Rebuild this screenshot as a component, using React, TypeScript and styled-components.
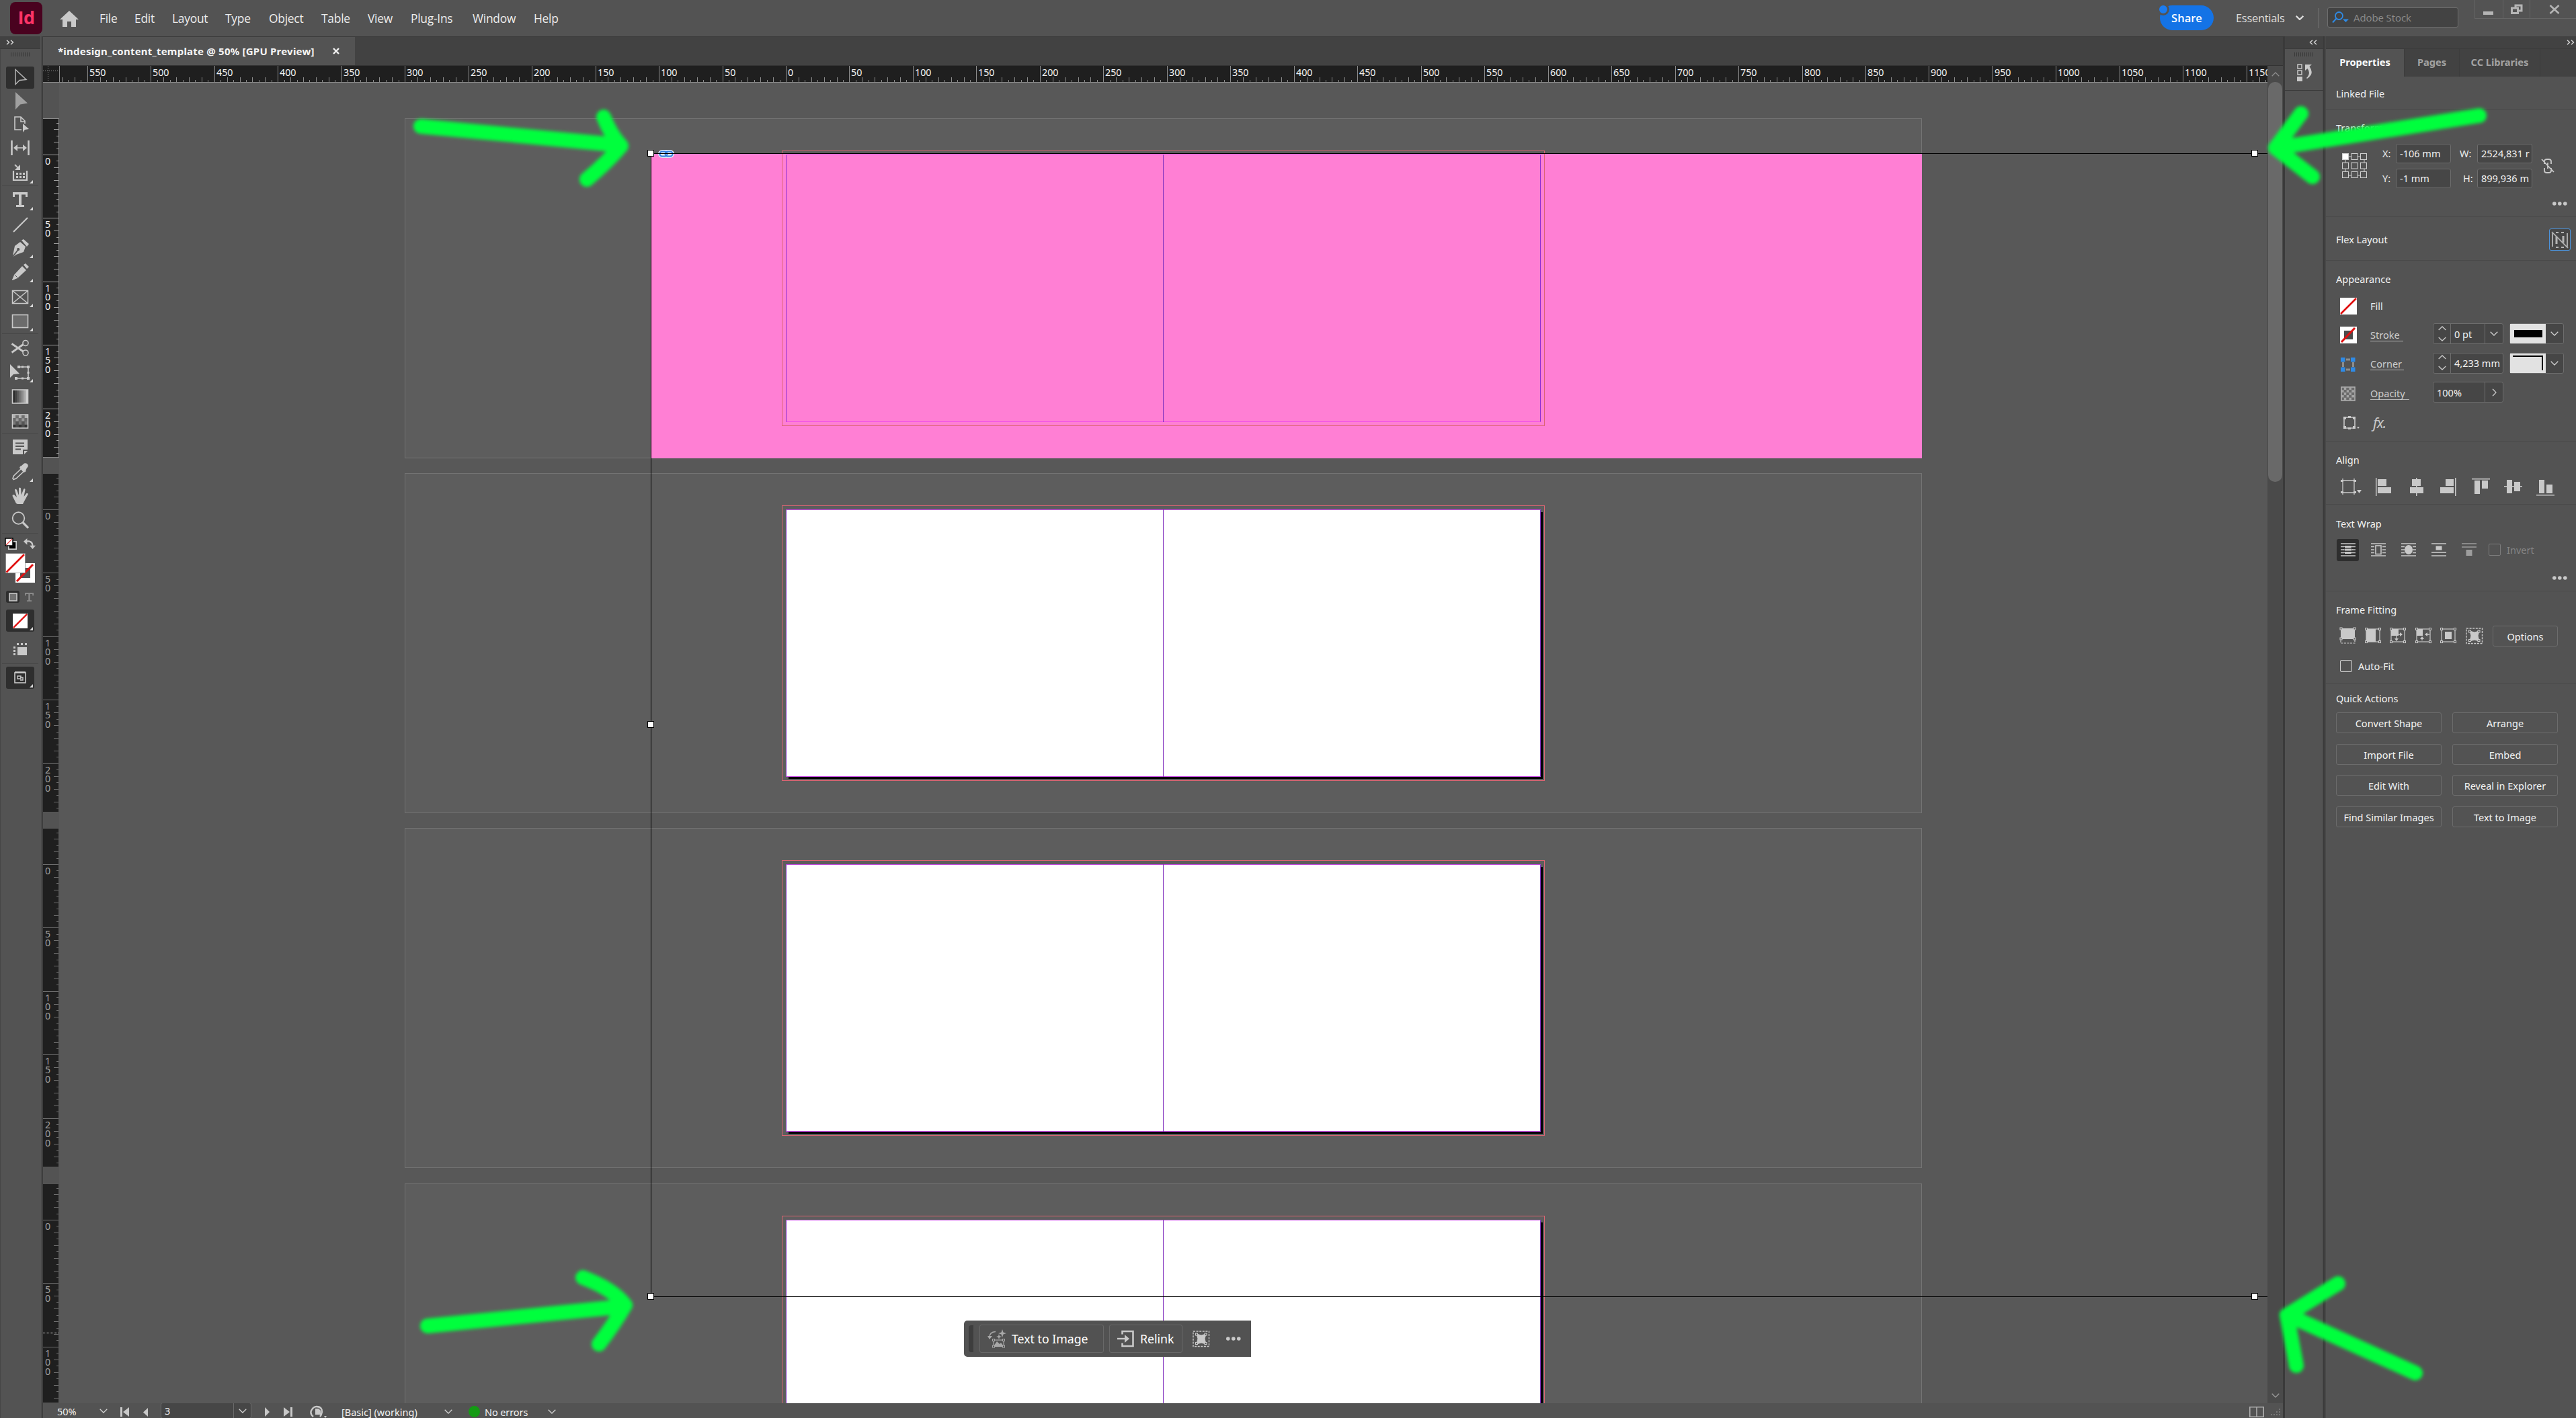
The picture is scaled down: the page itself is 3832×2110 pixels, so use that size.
import React from "react";
import styled, { createGlobalStyle, css } from "styled-components";

const C = {
  chrome: "#535353",
  dark: "#424242",
  edge: "#3a3a3a",
  field: "#464646",
  line: "#6d6d6d",
  icon: "#c9c9c9",
  text: "#f0f0f0",
  ruler: "#1f1f1f",
  canvas: "#585858",
  board: "#5d5d5d",
  green: "#00ff3c",
  blue: "#2f8be6",
};

const panelFont = `"Noto Sans", Tahoma, "DejaVu Sans", sans-serif`;
const menuFont = `"Open Sans", "Segoe UI", "Noto Sans", sans-serif`;

const Global = createGlobalStyle`
  html, body { margin: 0; background: ${C.chrome}; overflow: hidden; }
  * { box-sizing: border-box; }
`;

const Screen = styled.div`
  position: relative;
  width: 3832px;
  height: 2110px;
  display: flex;
  flex-direction: column;
  overflow: hidden;
  background: ${C.chrome};
  color: ${C.text};
  font-family: ${panelFont};
  font-size: 14.5px;
  white-space: nowrap;
`;

/* ---------- application bar ---------- */

const TopBar = styled.header`
  height: 54px;
  flex: none;
  display: flex;
  align-items: flex-start;
  font-family: ${menuFont};
`;
const Logo = styled.div`
  width: 48px;
  height: 48px;
  margin: 3px 26px 0 15px;
  border-radius: 8px;
  background: #49021f;
  color: #ff3366;
  font: 700 27px/46px ${menuFont};
  letter-spacing: -0.5px;
  text-align: center;
`;
const HomeBox = styled.div`
  width: 59px;
  padding-top: 16px;
`;
const Menu = styled.nav`
  display: flex;
  flex: 1;
  height: 54px;
  align-items: center;
`;
const MenuItem = styled.span<{ $w: number }>`
  width: ${(p) => p.$w}px;
  font-size: 17.4px;
  letter-spacing: -0.25px;
  color: #ececec;
`;
const Share = styled.div`
  position: relative;
  width: 80px;
  height: 37px;
  margin: 8px 33px 0 0;
  border-radius: 19px;
  background: #1473e6;
  color: #fff;
  font: 600 16.5px/37px ${menuFont};
  text-align: center;
`;
const ShareDot = styled.i`
  position: absolute;
  left: -4px;
  top: -3px;
  width: 18px;
  height: 18px;
  border-radius: 50%;
  background: #1b7cf0;
  border: 3px solid ${C.chrome};
`;
const Workspace = styled.div`
  width: 122px;
  height: 52px;
  display: flex;
  align-items: center;
  gap: 16px;
  font-size: 16.5px;
  letter-spacing: -0.3px;
  color: #dcdcdc;
`;
const BarDivider = styled.div`
  width: 2px;
  height: 30px;
  margin: 12px 12px 0 0;
  background: #636363;
`;
const Search = styled.div`
  width: 195px;
  height: 30px;
  margin-top: 11px;
  display: flex;
  align-items: center;
  gap: 6px;
  padding-left: 6px;
  border: 1px solid #6e6e6e;
  border-radius: 3px;
  background: #434343;
  color: #8b8b8b;
  font-size: 15px;
  letter-spacing: -0.1px;
`;
const WinButtons = styled.div`
  display: flex;
  width: 151px;
  height: 28px;
  margin-left: 24px;
  border-left: 1px solid #656565;
  border-bottom: 1px solid #656565;
`;
const WinButton = styled.div<{ $w: number; $last?: boolean }>`
  width: ${(p) => p.$w}px;
  display: flex;
  justify-content: center;
  align-items: center;
  padding-top: 1px;
  padding-left: ${(p) => (p.$last ? 4 : 0)}px;
  border-right: ${(p) => (p.$last ? "none" : "1px solid #656565")};
`;

/* ---------- body ---------- */

const Body = styled.div`
  flex: 1;
  min-height: 0;
  display: flex;
`;

const ToolColumn = styled.aside`
  width: 64px;
  flex: none;
  display: flex;
  flex-direction: column;
  align-items: center;
  padding-right: 3px;
  border-right: 1px solid ${C.edge};
  box-shadow: inset -2px 0 0 #494949, inset 1px 0 0 #464646;
`;
const HeaderStrip = styled.div<{ $align?: string; $pad?: number }>`
  align-self: stretch;
  flex: none;
  height: 19px;
  background: ${C.dark};
  display: flex;
  align-items: center;
  justify-content: ${(p) => p.$align || "flex-start"};
  padding: 0 ${(p) => p.$pad ?? 9}px;
  border-bottom: 1px solid #3b3b3b;
`;
const Grip = styled.div`
  width: 29px;
  height: 6px;
  flex: none;
  margin: 5px 0 0;
  background: repeating-linear-gradient(90deg, #393939 0 1px, transparent 1px 3px);
`;
const Slot = styled.div<{ $h: number; $down?: number }>`
  position: relative;
  width: 42px;
  height: ${(p) => p.$h}px;
  padding-top: ${(p) => p.$down || 0}px;
  flex: none;
  display: flex;
  align-items: center;
  justify-content: center;
`;
const ActiveBox = styled.div<{ $h?: number; $w?: number }>`
  width: ${(p) => p.$w || 42}px;
  height: ${(p) => p.$h || 33}px;
  border-radius: 3px;
  background: #2e2e2e;
  display: flex;
  align-items: center;
  justify-content: center;
`;
const Flyout = styled.i<{ $b?: number }>`
  position: absolute;
  right: 2px;
  bottom: ${(p) => p.$b ?? 3}px;
  width: 0;
  height: 0;
  border-left: 5px solid transparent;
  border-bottom: 5px solid #d8d8d8;
`;
const ToolRule = styled.div`
  width: 54px;
  height: 1px;
  flex: none;
  background: #484848;
`;
const PairRow = styled.div<{ $h: number; $w: number }>`
  height: ${(p) => p.$h}px;
  width: ${(p) => p.$w}px;
  flex: none;
  display: flex;
  align-items: center;
  justify-content: space-between;
`;

/* ---------- document ---------- */

const Doc = styled.main`
  width: 3332px;
  flex: none;
  display: flex;
  flex-direction: column;
`;
const TabBar = styled.div`
  height: 44px;
  flex: none;
  background: ${C.dark};
  border-top: 1px solid #3c3c3c;
  border-bottom: 1px solid #333;
`;
const DocTab = styled.div`
  width: 464px;
  height: 42px;
  padding: 0 23px 0 22px;
  display: flex;
  align-items: center;
  justify-content: space-between;
  background: ${C.chrome};
  font-weight: 700;
  font-size: 15px;
  letter-spacing: 0.22px;
  color: #f4f4f4;
`;
const DocRow = styled.div`
  display: flex;
  height: 1990px;
  flex: none;
`;
const DocLeft = styled.div`
  width: 3309px;
  display: flex;
  flex-direction: column;
`;
const CanvasRow = styled.div`
  display: flex;
  flex: 1;
`;
const RulerSvg = styled.svg`
  display: block;
  flex: none;
  font-family: ${panelFont};
  font-size: 14.3px;
`;
const Canvas = styled.div`
  position: relative;
  flex: 1;
  overflow: hidden;
  background: ${C.canvas};
`;
const Placed = styled.div<{ $x: number; $y: number; $w: number; $h: number }>`
  position: absolute;
  left: ${(p) => p.$x - 88}px;
  top: ${(p) => p.$y - 123}px;
  width: ${(p) => p.$w}px;
  height: ${(p) => p.$h}px;
`;
const Pasteboard = styled(Placed)`
  background: ${C.board};
  border: 1px solid #737373;
`;
const Shadow = styled(Placed)`
  background: #000;
`;
const Bleed = styled(Placed)`
  border: 1px solid #dd6473;
`;
const Page = styled(Placed)<{ $clear?: boolean }>`
  background: ${(p) => (p.$clear ? "transparent" : "#fff")};
  border: 1px solid ${(p) => (p.$clear ? "#9030d0" : "#8a35c8")};
  border-top-color: ${(p) => (p.$clear ? "#f050e8" : "#c94be6")};
  border-bottom-color: ${(p) => (p.$clear ? "#f050e8" : "#c94be6")};
`;
const Spine = styled(Placed)`
  background: #8535bf;
`;
const PinkImage = styled(Placed)`
  background: #ff7fd4;
`;
const Edge = styled(Placed)`
  background: #000;
`;
const Handle = styled(Placed)`
  background: #fff;
  border: 1px solid #000;
`;
const LinkBadge = styled(Placed)`
  border-radius: 6px;
  background: #dfe8f6;
  svg { display: block; }
`;
const ContextBar = styled(Placed)`
  display: flex;
  align-items: center;
  background: #525252;
  border-radius: 5px 0 0 5px;
  padding-left: 7px;
  font-size: 17.7px;
  color: #fff;
`;
const ContextGrip = styled.div`
  width: 7px;
  height: 40px;
  margin-right: 9px;
  border-radius: 4px 0 0 4px;
  background: #3d3d3d;
`;
const ContextButton = styled.div<{ $w: number }>`
  width: ${(p) => p.$w}px;
  height: 42px;
  margin-right: 8px;
  padding-left: 11px;
  display: flex;
  align-items: center;
  gap: 8px;
  border: 1px solid #686868;
  border-radius: 3px;
`;
const ScrollTrack = styled.div`
  width: 23px;
  display: flex;
  flex-direction: column;
  align-items: center;
  background: #4a4a4a;
`;
const ScrollEnd = styled.div`
  height: 24px;
  flex: none;
  display: flex;
  align-items: center;
`;
const Thumb = styled.div`
  width: 21px;
  height: 595px;
  border-radius: 10px;
  background: #696969;
`;
const Spacer = styled.div`
  flex: 1;
`;
const StatusBar = styled.div`
  height: 22px;
  flex: none;
  display: flex;
  align-items: center;
  background: ${C.chrome};
  font-size: 14.5px;
  overflow: hidden;
  padding-left: 21px;
`;
const StatusCell = styled.div<{ $w: number; $down?: number; $ls?: number }>`
  width: ${(p) => p.$w}px;
  height: 22px;
  display: flex;
  flex: none;
  align-items: center;
  letter-spacing: ${(p) => p.$ls || 0}px;
  padding-top: ${(p) => p.$down || 0}px;
`;
const PageField = styled.div`
  width: 135px;
  height: 24px;
  margin-right: 20px;
  flex: none;
  display: flex;
  align-items: center;
  justify-content: space-between;
  padding-left: 5px;
  border: 1px solid #6a6a6a;
  border-radius: 3px;
  background: ${C.field};
`;
const PageDrop = styled.div`
  width: 26px;
  height: 22px;
  display: flex;
  align-items: center;
  justify-content: center;
  border-left: 1px solid #6a6a6a;
`;
const OkDot = styled.i`
  width: 17px;
  height: 17px;
  border-radius: 50%;
  background: #149b14;
`;

/* ---------- dock and properties ---------- */

const Dock = styled.aside`
  width: 62px;
  flex: none;
  display: flex;
  flex-direction: column;
  align-items: center;
  border-left: 3px solid ${C.edge};
  border-right: 2px solid ${C.edge};
  box-shadow: inset -1px 0 0 #484848;
`;
const DockCell = styled.div`
  height: 62px;
  align-self: stretch;
  display: flex;
  flex-direction: column;
  align-items: center;
  gap: 10px;
  border-bottom: 1px solid ${C.edge};
`;
const Panel = styled.aside`
  width: 374px;
  display: flex;
  flex-direction: column;
  border-left: 2px solid #484848;
`;
const PanelTabs = styled.div`
  height: 41px;
  flex: none;
  display: flex;
  background: ${C.dark};
`;
const PanelTab = styled.div<{ $w: number; $on?: boolean }>`
  width: ${(p) => p.$w}px;
  height: 41px;
  text-align: center;
  line-height: 38px;
  font-weight: 700;
  font-size: 14.7px;
  letter-spacing: -0.05px;
  color: ${(p) => (p.$on ? "#fafafa" : "#a2a2a2")};
  background: ${(p) => (p.$on ? C.chrome : "transparent")};
  border-right: 1px solid #3c3c3c;
`;
const Section = styled.section<{ $h: number; $pt: number; $last?: boolean }>`
  height: ${(p) => p.$h}px;
  flex: none;
  padding: ${(p) => p.$pt}px 8px 0 15px;
  border-bottom: ${(p) => (p.$last ? "none" : "1px solid #4a4a4a")};
`;
const Title = styled.div`
  height: 20px;
  line-height: 18px;
  color: #f2f2f2;
`;
const Row = styled.div<{ $h: number; $mt?: number; $ml?: number; $end?: boolean }>`
  display: flex;
  align-items: center;
  height: ${(p) => p.$h}px;
  margin-top: ${(p) => p.$mt || 0}px;
  margin-left: ${(p) => p.$ml || 0}px;
  ${(p) => p.$end && css`
    justify-content: flex-end;
    padding-right: 5px;
  `}
`;
const TransformBox = styled.div`
  display: flex;
  align-items: center;
  height: 67px;
  margin-top: 12px;
`;
const TransformGrid = styled.div`
  display: grid;
  grid-template-columns: 29px 82px 39px 82px;
  grid-template-rows: 30px 30px;
  row-gap: 7px;
  align-items: center;
  justify-items: start;
`;
const ReferencePoint = styled.div`
  width: 60px;
  padding-left: 9px;
  svg { display: block; }
`;
const LinkCell = styled.div`
  padding-left: 13px;
  svg { display: block; }
`;
const Label = styled.span<{ $pad?: number }>`
  padding-left: ${(p) => p.$pad || 0}px;
  color: #ececec;
`;
const Field = styled.div`
  width: 82px;
  height: 29px;
  padding: 0 3px 0 5px;
  line-height: 26px;
  overflow: hidden;
  border: 1px solid ${C.line};
  border-radius: 3px;
  background: ${C.field};
`;
const FlexRow = styled.div`
  display: flex;
  justify-content: space-between;
  align-items: center;
`;
const FlexButton = styled.div`
  width: 32px;
  height: 33px;
  display: flex;
  align-items: center;
  justify-content: center;
  border: 1px solid #4b95df;
  border-radius: 3px;
  background: #474747;
`;
const IconCell = styled.div<{ $w: number; $ml?: number }>`
  width: ${(p) => p.$w}px;
  margin-left: ${(p) => p.$ml || 0}px;
  flex: none;
  display: flex;
  align-items: center;
`;
const Underlined = styled.span<{ $w: number }>`
  width: ${(p) => p.$w}px;
  line-height: 17px;
  border-bottom: 1px solid #b5b5b5;
  color: #cdcdcd;
`;
const LabelCell = styled.div`
  width: 93px;
  display: flex;
`;
const Combo = styled.div<{ $w?: number }>`
  display: flex;
  width: ${(p) => p.$w || 105}px;
  height: 31px;
  margin-bottom: 4px;
  border: 1px solid ${C.line};
  border-radius: 3px;
  background: ${C.field};
`;
const ComboPart = styled.div<{ $w: number; $center?: boolean; $last?: boolean }>`
  width: ${(p) => p.$w}px;
  flex: none;
  display: flex;
  align-items: center;
  justify-content: ${(p) => (p.$center ? "center" : "flex-start")};
  padding-left: ${(p) => (p.$center ? 0 : 5)}px;
  border-right: ${(p) => (p.$last ? "none" : `1px solid ${C.line}`)};
`;
const SwatchCombo = styled(Combo)`
  margin-left: 9px;
`;
const Swatch = styled.div`
  width: 53px;
  height: 29px;
  display: flex;
  align-items: center;
  justify-content: center;
  background: #e2e2e2;
`;
const StrokeSample = styled.div`
  width: 42px;
  height: 11px;
  background: #000;
`;
const CornerSample = styled.div`
  width: 45px;
  height: 22px;
  border-top: 2px solid #000;
  border-right: 2px solid #000;
`;
const Fx = styled.span`
  font: italic 21px/24px ${panelFont};
  letter-spacing: -1px;
  color: ${C.icon};
`;
const WrapOn = styled.div`
  width: 33px;
  height: 33px;
  display: flex;
  align-items: center;
  justify-content: center;
  border-radius: 3px;
  background: #2e2e2e;
`;
const Check = styled.i<{ $dim?: boolean }>`
  width: 18px;
  height: 18px;
  margin-right: 9px;
  border: 1px solid ${(p) => (p.$dim ? "#7c7c7c" : "#d2d2d2")};
  border-radius: 2px;
`;
const Dim = styled.span`
  color: #858585;
`;
const Button = styled.div<{ $w?: number }>`
  width: ${(p) => p.$w || 157}px;
  height: 31px;
  line-height: 30px;
  text-align: center;
  border: 1px solid #6c6c6c;
  border-radius: 3px;
  color: #f4f4f4;
`;
const ButtonGrid = styled.div`
  display: grid;
  grid-template-columns: 157px 157px;
  column-gap: 16px;
  row-gap: 15.6px;
  margin-top: 10px;
`;
const Marks = styled.svg`
  position: absolute;
  left: 0;
  top: 0;
  pointer-events: none;
`;

/* ---------- drawings ---------- */

const Glyph = styled.svg`
  flex: none;
`;

type IcoProps = { w?: number; h?: number; vb?: string; c?: string; children: React.ReactNode };
const Ico = ({ w = 26, h = 26, vb, c = C.icon, children }: IcoProps) => (
  <Glyph width={w} height={h} viewBox={vb || `0 0 ${w} ${h}`} fill="none" stroke={c} strokeWidth={1.6}>
    {children}
  </Glyph>
);
const F = (p: React.SVGProps<SVGPathElement>) => <path fill={C.icon} stroke="none" {...p} />;

const Chevron = ({ c = "#d0d0d0", sw = 1.3, up = false, w = 12 }) => (
  <Ico w={w} h={7} vb="0 0 12 7" c={c}>
    <path d={up ? "M.7 6.2 6 1l5.3 5.2" : "M.7.8 6 6 11.3.8"} strokeWidth={sw} />
  </Ico>
);
const DoubleArrow = ({ left = false }) => (
  <Ico w={12} h={8} c="#dadada">
    <path d={left ? "M5 .8 1.500 4 5 7.200M11 .8 7.500 4 11 7.200" : "M1 .8 4.500 4 1 7.200M7 .8 10.500 4 7 7.200"} strokeWidth={1.4} />
  </Ico>
);
const Dots = () => (
  <Ico w={22} h={6}>
    <F d="M0 3a2.800 2.800 0 1 0 5.600 0a2.800 2.800 0 1 0-5.600 0M8 3a2.800 2.800 0 1 0 5.600 0a2.800 2.800 0 1 0-5.600 0M16 3a2.800 2.800 0 1 0 5.600 0a2.800 2.800 0 1 0-5.600 0" />
  </Ico>
);

const corner = (x: number, y: number) => <rect key={`${x}-${y}`} x={x - 1.5} y={y - 1.5} width={3} height={3} fill={C.chrome} strokeWidth={1.1} />;
const Frame = ({ children, x = 2, y = 2, s = 20 }: { children?: React.ReactNode; x?: number; y?: number; s?: number }) => (
  <Ico w={25} h={24}>
    {children}
    <rect x={x} y={y} width={s} height={s - 1} strokeWidth={1.2} />
    {[x, x + s].flatMap((cx) => [y, y + s - 1].map((cy) => corner(cx, cy)))}
  </Ico>
);
const FitFrame = () => (
  <Ico w={26} h={25}>
    <rect x={1} y={1} width={23.5} height={22.5} strokeDasharray="3 1.600" strokeWidth={1.4} />
    <path d="M6 5 8 12 6 20 13 18 20 20 18 12 20 5 13 7Z" fill={C.icon} strokeWidth={1} />
    {[6, 19.5].flatMap((cx) => [5.5, 19].map((cy) => corner(cx, cy)))}
  </Ico>
);
const NoneSwatch = ({ s = 25 }) => (
  <svg width={s} height={s} viewBox="0 0 25 25"><path fill="#fff" d="M0 0h25v25H0z" /><path d="M1 24 24 1" stroke="#e01010" strokeWidth={2.6} /></svg>
);
const StrokeNone = () => (
  <svg width={25} height={25}><path fill="#fff" d="M0 0h25v25H0z" /><path fill="#4b4b4b" d="M6 6h13v13H6z" /><path d="M2 23 22 2" stroke="#e01010" strokeWidth={3} /></svg>
);
const FeatherChecker = () => (
  <Ico w={26} h={22}>
    {Array.from({ length: 20 }, (_, i) => {
      const cx = i % 5;
      const cy = Math.floor(i / 5);
      return (
        <rect key={i} x={2 + cx * 4.4} y={1.5 + cy * 4.8} width={4.4} height={4.8} stroke="none"
          fill={(cx + cy) % 2 ? ["#707070", "#6a6a6a", "#555", "#333"][cy] : ["#b0b0b0", "#999", "#777", "#4a4a4a"][cy]} />
      );
    })}
    <rect x={1.5} y={1} width={23} height={20} />
  </Ico>
);

const tools: { h: number; fly?: boolean; rule?: boolean; on?: boolean; art: React.ReactNode }[] = [
  { h: 36, on: true, art: <Ico c="#b4b4b4"><path d="M6 1.500V23.500L12 17.500 22 16.500Z" strokeWidth={1.5} /></Ico> },
  { h: 34, art: <Ico><F fill="#a0a0a0" d="M6 0V26L13 18.500 24 16.500Z" /></Ico> },
  { h: 35, art: <Ico><path d="M15 21H5V2h9l6 6v4M14 2v7h6" /><F d="M17 12v13l3-4 6-1z" /></Ico> },
  { h: 36, art: <Ico w={28} h={22}><path d="M1.500 0v22M26.500 0v22" strokeWidth={2.6} /><path d="M7 11h14" /><F d="M4 11l6-5v10zM24 11l-6-5v10z" /></Ico> },
  { h: 38, fly: true, rule: true, art: <Ico w={24} h={26}><path d="M2 10v14h20V10" strokeWidth={2.2} /><path d="M4 1l6 6" strokeWidth={2} /><F d="M12 1v8H4zM6 13h3v3H6zM11 13h3v3h-3zM16 13h3v3h-3zM6 18h3v3H6zM11 18h3v3h-3zM16 18h3v3h-3z" /></Ico> },
  { h: 39, fly: true, art: <Ico w={24} h={22}><F d="M1 0h22v7h-3V3.500h-6V19h4v3H6v-3h4V3.500H4V7H1z" /></Ico> },
  { h: 35, art: <Ico><path d="M3 24 24 3" strokeWidth={2.2} /></Ico> },
  { h: 36, fly: true, art: <Ico><F d="M15 1.500l3-1.500 8 7-3 4zM13 4l8 7-3 8-11 4-4 3 7-9a2 2 0 1 0-1.500-1L2 24.500 5 10z" /></Ico> },
  { h: 36, fly: true, art: <Ico><F d="M18 2l3-2 5 5-3 3zM16 4l6 6L9 22 1 25l3-8z" /><path d="M5 17l4 4" stroke={C.chrome} strokeWidth={1} /><F d="M1 25l1.500-4 2.500 2.500z" /></Ico> },
  { h: 37, fly: true, art: <Ico w={26} h={22}><path d="M1.500 1.500h23v19h-23zM1.500 1.500l23 19M24.500 1.500l-23 19" strokeWidth={1.5} /></Ico> },
  { h: 36, fly: true, rule: true, art: <Ico w={26} h={22}><rect x={1.5} y={1.5} width={23} height={19} fill="#6c6c6c" /></Ico> },
  { h: 41, art: <Ico w={28} h={26}><circle cx={22} cy={5.5} r={4} /><circle cx={22} cy={20} r={4} /><path d="M18.500 18 1.500 6.500M18.500 7.500 1.500 19.500" strokeWidth={2.8} /></Ico> },
  { h: 34, fly: true, art: <Ico w={32} h={26}><path d="M12 4h16v17H9" /><F d="M12 2h4v4h-4zM26 2h4v4h-4zM26 19h4v4h-4zM8 19h4v4H8zM18 2.500h3v3h-3zM18 19.500h3v3h-3zM26.500 11h3v3h-3zM1 0v20l5-5 9-1z" /></Ico> },
  { h: 36, art: (
    <Ico w={26} h={22}>
      {["#2c2c2c", "#444", "#5c5c5c", "#757575", "#8d8d8d", "#a8a8a8", "#d0d0d0"].map((f, i) => <rect key={f} x={2 + i * 3.2} y={1} width={3.4} height={20} fill={f} stroke="none" />)}
      <rect x={1.5} y={1} width={23} height={20} />
    </Ico>
  ) },
  { h: 37, rule: true, art: <FeatherChecker /> },
  { h: 38, art: <Ico w={24} h={22}><F d="M1 0h22v15h-7v7H1zM18 17h5l-5 5z" /><path d="M5 5.500h13M5 10h13M5 14.500h8" stroke={C.chrome} strokeWidth={1.8} /></Ico> },
  { h: 36, fly: true, art: <Ico><path d="M15 8l4 4L7 23l-4 1.500L2 23l1.500-4z" /><F d="M13 5l2-1 4-3.500q5-1 6 4L22 9l-1 4-3 1-6-7z" /></Ico> },
  { h: 35, art: <Ico><F d="M7 24 1.500 13q0-3 3-1.500L8 15 5 4q1-2.500 3 0l3 8L11 1.500q1.500-2 3 0l.8 10L18 3q2-2 2.500.500L18.500 14l4-5q3-.5 2 2L19 21l-2 4H9z" /></Ico> },
  { h: 38, rule: true, art: <Ico><circle cx={10.5} cy={10} r={8.8} strokeWidth={1.8} /><path d="M17 16.500 25 24.500" strokeWidth={3.2} /></Ico> },
];

/* ---------- rulers ---------- */

const MM = 1.8894;
const X0 = 1169.5;

const TopRuler = () => {
  const ticks: string[] = [];
  const labels: { x: number; t: string }[] = [];
  for (let mm = -570; mm <= 1165; mm += 5) {
    const x = Math.round(X0 + mm * MM - 64.5) + 0.5;
    if (x < 25) continue;
    const len = mm % 50 === 0 ? 25 : mm % 10 === 0 ? 8 : 4;
    ticks.push(`M${x} ${25 - len}V25`);
    if (mm % 50 === 0) labels.push({ x: x + 2.5, t: String(Math.abs(mm)) });
  }
  return (
    <RulerSvg width={3309} height={25}>
      <rect width={3309} height={25} fill={C.ruler} />
      <path d={ticks.join("")} stroke="#8c8c8c" />
      <path d="M0 24.500H3309M24.500 0V25" stroke="#8c8c8c" />
      <path d="M0 7.500H24M7.500 0V24" stroke="#9a9a9a" strokeDasharray="1 2" />
      {labels.map((l) => <text key={l.x} x={l.x} y={14.5} fill="#f2f2f2">{l.t}</text>)}
    </RulerSvg>
  );
};

const spreads = [230, 758, 1286, 1815];

const SideRuler = () => (
  <RulerSvg width={24} height={1965} viewBox="0 123 24 1965">
    <rect y={123} width={24} height={1965} fill={C.chrome} />
    {spreads.map((y0, s) => {
      const top = y0 - 54;
      const end = Math.min(y0 + 451, 2088);
      const col = s === 0 ? "#a0a0a0" : "#6f6f6f";
      let d = "";
      const txt: React.ReactNode[] = [];
      for (let mm = -25; mm <= 235; mm += 5) {
        const y = Math.round(y0 + mm * MM) + 0.5;
        if (y > end) break;
        d += `M${mm % 50 === 0 ? 0 : mm % 10 === 0 ? 16 : 20} ${y}H24`;
        if (mm >= 0 && mm % 50 === 0)
          String(mm).split("").forEach((ch, i) => txt.push(
            <text key={`${mm}-${i}`} x={3} y={y + 14.5 + i * 13.3} fill={s === 0 ? "#f2f2f2" : "#a0a0a0"}>{ch}</text>
          ));
      }
      return (
        <g key={y0}>
          <rect y={top} width={24} height={end - top} fill={C.ruler} />
          <path d={d} stroke={col} />
          <path d={`M0 ${top + 0.5}H24M23.500 ${top}V${end}M0 ${end - 0.5}H24`} stroke={s === 0 ? "#8c8c8c" : "#555"} />
          {txt}
        </g>
      );
    })}
    <path d="M0 1983.500H24" stroke="#eee" strokeDasharray="1 1" />
  </RulerSvg>
);

const Lines = ({ kind }: { kind: number }) => {
  const c = kind === 4 ? "#9d9d9d" : C.icon;
  return (
    <Ico w={22} h={22} c={c}>
      {kind === 4 ? <path d="M0 2h22M0 7h22" /> : <path d="M0 2h22M0 20h22" />}
      {kind < 3 && <path d="M0 6.500h5M0 11h5M0 15.500h5M17 6.500h5M17 11h5M17 15.500h5" />}
      {kind === 0 && <F d="M6 5h10v3H6zM6 9.500h10v3H6zM6 14h10v3H6z" />}
      {kind === 0 && <path d="M4 6.500h14M4 11h14M4 15.500h14" strokeWidth={1} />}
      {kind === 1 && <rect x={7} y={5} width={8} height={12.5} />}
      {kind === 2 && <ellipse cx={11} cy={11} rx={6} ry={7} fill={C.icon} stroke="none" />}
      {kind === 3 && <><path d="M0 15h22" /><F d="M6.500 5.500h9v6h-9z" /></>}
      {kind === 4 && <F fill={c} d="M6.500 11h9v9h-9z" />}
    </Ico>
  );
};

const alignArt = [
  "M1 0h1.500v27H1zM4 2h13v10H4zM4 14h20v9H4z",
  "M13 0h1.500v27H13zM7 2h13v10H7zM4 14h20v9H4z",
  "M23 0h1.500v27H23zM9 2h12v10H9zM1 14h20v9H1z",
  "M0 1h27v1.500H0zM4 4h8v20H4zM15 4h9v12h-9z",
  "M0 12h27v1.500H0zM4 3h8v20H4zM15 6h9v14h-9z",
  "M0 25h27v1.500H0zM4 3h8v20H4zM15 10h9v13h-9z",
];

const Spinner = () => (
  <ComboPart $w={26} $center>
    <Ico w={12} h={24}><path d="M.7 6 6 1l5.300 5M.7 17 6 22l5.300-5" strokeWidth={1.3} /></Ico>
  </ComboPart>
);

const menu: [string, number][] = [
  ["File", 52], ["Edit", 56], ["Layout", 79], ["Type", 65], ["Object", 78],
  ["Table", 69], ["View", 64], ["Plug-Ins", 92], ["Window", 91], ["Help", 60],
];

export default function App() {
  return (
    <Screen>
      <Global />
      <TopBar>
        <Logo>Id</Logo>
        <HomeBox>
          <Ico w={28} h={24}><F d="M14 0 28 13H24V24H17V16H11V24H4V13H0Z" /></Ico>
        </HomeBox>
        <Menu>{menu.map(([t, w]) => <MenuItem key={t} $w={w}>{t}</MenuItem>)}</Menu>
        <Share><ShareDot />Share</Share>
        <Workspace>Essentials<Chevron sw={2.2} c="#e0e0e0" /></Workspace>
        <BarDivider />
        <Search>
          <Ico w={26} h={18} c={C.blue}><circle cx={10.5} cy={6.5} r={5.5} strokeWidth={1.8} /><path d="M6.500 10.500 1 16.500" strokeWidth={2} /><path d="M16 11.500h9L20.500 16z" fill={C.blue} stroke="none" /></Ico>
          Adobe Stock
        </Search>
        <WinButtons>
          <WinButton $w={42}><Ico w={16} h={20}><F d="M0 13h15v5H0z" fill="#b5b5b5" /></Ico></WinButton>
          <WinButton $w={41}><Ico w={20} h={16} c="#b5b5b5"><path d="M8 5V2h9v8h-4M2.500 6h9v7.500h-9z" strokeWidth={3} /></Ico></WinButton>
          <WinButton $w={68} $last><Ico w={16} h={14} c="#b5b5b5"><path d="M1.500 1 14.500 13M14.500 1 1.500 13" strokeWidth={2.6} /></Ico></WinButton>
        </WinButtons>
      </TopBar>

      <Body>
        <ToolColumn>
          <HeaderStrip><DoubleArrow /></HeaderStrip>
          <Grip />
          <Slot $h={13} />
          {tools.map((t, i) => (
            <React.Fragment key={i}>
              <Slot $h={t.h}>
                {t.on ? <ActiveBox>{t.art}</ActiveBox> : t.art}
                {t.fly && <Flyout />}
              </Slot>
              {t.rule && <ToolRule />}
            </React.Fragment>
          ))}
          <PairRow $h={29} $w={46}>
            <svg width={18} height={18}>
              <rect x={6} y={6} width={11} height={11} fill="none" stroke="#ccc" strokeWidth={2} />
              <rect x={8.5} y={8.5} width={6} height={6} fill="none" stroke="#000" strokeWidth={3.5} />
              <rect x={1} y={1} width={11} height={11} fill="#fff" stroke="#000" strokeWidth={1.5} />
              <path d="M2 11 11 2" stroke="#e44" strokeWidth={1.2} />
            </svg>
            <Ico w={18} h={18} vb="0 0 20 18"><path d="M5 5h4q6 1 6 8" strokeWidth={2.6} /><F d="M0 5.500 6 0v11zM10 12h10l-5 6z" /></Ico>
          </PairRow>
          <Glyph width={44} height={44}>
            <path fill="#fff" d="M15 15h29v29H15z" /><path fill={C.chrome} d="M22 22h15v15H22z" />
            <path d="M17 42 41 17" stroke="#e01010" strokeWidth={3} />
            <path fill="#fff" stroke="#777" strokeWidth={0.6} d="M.5 .5h29v29H.5z" />
            <path d="M1.500 28.500 28 2" stroke="#e01010" strokeWidth={2.6} />
          </Glyph>
          <PairRow $h={42} $w={42}>
            <ActiveBox $h={18} $w={20}>
              <Ico w={13} h={13}><rect x={1} y={1} width={11} height={11} fill="#737373" /></Ico>
            </ActiveBox>
            <Ico w={15} h={13} vb="0 0 24 22"><F fill="#8a8a8a" d="M1 0h22v7h-3V3.500h-6V19h4v3H6v-3h4V3.500H4V7H1z" /></Ico>
          </PairRow>
          <Slot $h={29}><ActiveBox><NoneSwatch s={22} /></ActiveBox><Flyout $b={0} /></Slot>
          <Slot $h={49} $down={7}>
            <Ico w={20} h={18}><F d="M6 6h14v12H6zM5 0h3v3H5zM11 0h3v3h-3zM17 0h3v3h-3zM0 5h3v3H0zM0 10h3v3H0zM0 15h3v3H0z" /></Ico>
          </Slot>
          <ToolRule />
          <Slot $h={40}>
            <ActiveBox>
              <Ico w={18} h={18}><rect x={1} y={2} width={16} height={15} /><path d="M1 1.500h16" strokeWidth={2.5} /><path d="M5 7h5v4H5zM9 9h4v4H9" strokeWidth={1.4} /></Ico>
            </ActiveBox>
            <Flyout $b={5} />
          </Slot>
        </ToolColumn>

        <Doc>
          <TabBar>
            <DocTab>
              *indesign_content_template @ 50% [GPU Preview]
              <Ico w={10} h={10} c="#f4f4f4"><path d="M1 1l8 8M9 1 1 9" strokeWidth={2.4} /></Ico>
            </DocTab>
          </TabBar>
          <DocRow>
            <DocLeft>
              <TopRuler />
              <CanvasRow>
                <SideRuler />
                <Canvas>
                  {spreads.map((y) => <Pasteboard key={y} $x={602} $y={y - 54} $w={2257} $h={506} />)}
                  {spreads.slice(1).map((y) => (
                    <React.Fragment key={y}>
                      <Shadow $x={1173} $y={y + 4} $w={1122} $h={397} />
                      <Bleed $x={1163} $y={y - 6} $w={1135} $h={410} />
                      <Page $x={1169} $y={y} $w={1123} $h={398} />
                      <Spine $x={1730} $y={y} $w={1} $h={398} />
                    </React.Fragment>
                  ))}
                  <PinkImage $x={968} $y={228} $w={1891} $h={454} />
                  <Bleed $x={1163} $y={224} $w={1135} $h={410} />
                  <Page $clear $x={1169} $y={230} $w={1123} $h={398} />
                  <Spine $x={1730} $y={230} $w={1} $h={398} />
                  <LinkBadge $x={979} $y={223} $w={24} $h={12}>
                    <svg width={24} height={12} fill="none" stroke="#2f7fe0" strokeWidth={2}>
                      <rect x={2.5} y={2.5} width={11} height={7} rx={3.5} />
                      <rect x={10.5} y={2.5} width={11} height={7} rx={3.5} />
                    </svg>
                  </LinkBadge>
                  <Edge $x={968} $y={228} $w={2405} $h={1} />
                  <Edge $x={968} $y={228} $w={1} $h={1702} />
                  <Edge $x={968} $y={1929} $w={2405} $h={1} />
                  {[[968, 228], [3354, 228], [968, 1078], [968, 1929], [3354, 1929]].map(([x, y]) => (
                    <Handle key={`${x}-${y}`} $x={x - 5} $y={y - 5} $w={10} $h={10} />
                  ))}
                  <ContextBar $x={1434} $y={1965} $w={427} $h={54}>
                    <ContextGrip />
                    <ContextButton $w={185}>
                      <Ico w={28} h={28} c="#a8a8a8">
                        <path d="M3 12Q3 4 12 3.500" strokeWidth={1.6} />
                        <path d="M0 10h7l-4 5zM22 0l1.500 4.500L28 6l-4.500 1.500L22 12l-1.500-4.500L16 6l4.500-1.500zM17 7l1 3 3 1-3 1-1 3-1-3-3-1 3-1zM9 25l5-7 4 4 2-2 4 5z" fill="#a8a8a8" stroke="none" />
                        <rect x={9} y={16} width={15} height={9.5} strokeWidth={1.2} />
                        {[9, 24].flatMap((x) => [16, 25.5].map((y) => <rect key={`${x}${y}`} x={x - 1.5} y={y - 1.5} width={3} height={3} fill={C.chrome} strokeWidth={1} />))}
                      </Ico>
                      Text to Image
                    </ContextButton>
                    <ContextButton $w={109}>
                      <Ico w={26} h={26}><path d="M7.500 6.500V2h16v22h-16v-4.500" strokeWidth={2.6} /><path d="M0 13h12" strokeWidth={2.4} /><F d="M11 7l7 6-7 6z" /></Ico>
                      Relink
                    </ContextButton>
                    <IconCell $w={50} $ml={7}><FitFrame /></IconCell>
                    <Dots />
                  </ContextBar>
                </Canvas>
              </CanvasRow>
            </DocLeft>
            <ScrollTrack>
              <ScrollEnd><Chevron up c="#8c8c8c" /></ScrollEnd>
              <Thumb />
              <Spacer />
              <ScrollEnd><Chevron c="#9a9a9a" /></ScrollEnd>
            </ScrollTrack>
          </DocRow>
          <StatusBar>
            <StatusCell $w={63} $down={1}>50%</StatusCell>
            <StatusCell $w={31} $down={1}><Chevron /></StatusCell>
            <StatusCell $w={34} $down={4}><Ico w={14} h={14}><F d="M0 0h3v14H0zM13 0v14L4 7z" /></Ico></StatusCell>
            <StatusCell $w={26} $down={4}><Ico w={8} h={13}><F d="M7 0v13L0 6.500z" /></Ico></StatusCell>
            <PageField>3<PageDrop><Chevron /></PageDrop></PageField>
            <StatusCell $w={28} $down={4}><Ico w={8} h={14}><F d="M0 0v14l7-7z" /></Ico></StatusCell>
            <StatusCell $w={38} $down={4}><Ico w={14} h={14}><F d="M0 0v14l9-7zM10 0h3v14h-3z" /></Ico></StatusCell>
            <StatusCell $w={48} $down={3}><Ico w={26} h={20}><path d="M6 17Q1 13 3 8q3-6 8-6 8 0 8 8-1 5-3 7" strokeWidth={2.4} /><F d="M9 5h5l3 3v6H9zM22 16h4l-2 3z" /></Ico></StatusCell>
            <StatusCell $w={153} $down={4}>[Basic] (working)</StatusCell>
            <StatusCell $w={36} $down={2}><Chevron /></StatusCell>
            <StatusCell $w={24} $down={2}><OkDot /></StatusCell>
            <StatusCell $w={94} $down={4} $ls={-0.1}>No errors</StatusCell>
            <StatusCell $w={40} $down={3}><Chevron /></StatusCell>
            <Spacer />
            <StatusCell $w={32} $down={4}><Ico w={22} h={16} c="#adadad"><path d="M.8.8h20.400v14.400H.8zM11 0v16" /></Ico></StatusCell>
            <StatusCell $w={18} $down={6}><Ico w={15} h={12}><F fill="#777" d="M12 0h2v2h-2zM12 4h2v2h-2zM12 8h2v2h-2zM8 4h2v2H8zM8 8h2v2H8zM4 8h2v2H4zM0 8h2v2H0z" /></Ico></StatusCell>
          </StatusBar>
        </Doc>

        <Dock>
          <HeaderStrip $align="flex-end"><DoubleArrow left /></HeaderStrip>
          <DockCell>
            <Grip />
            <Ico w={24} h={28}>
              <path d="M2 2h6v6H2zM2 11h6v6H2z" strokeWidth={1.5} /><F d="M1 20h8v7H1z" />
              <F d="M13 11V2h10l-3.500 3q8 11-3.500 18l-1-1q7-7 1.500-14z" />
            </Ico>
          </DockCell>
        </Dock>

        <Panel>
          <HeaderStrip $align="flex-end" $pad={2}><DoubleArrow /></HeaderStrip>
          <PanelTabs>
            <PanelTab $w={117} $on>Properties</PanelTab>
            <PanelTab $w={82}>Pages</PanelTab>
            <PanelTab $w={120}>CC Libraries</PanelTab>
          </PanelTabs>
          <Section $h={49} $pt={16}><Title>Linked File</Title></Section>
          <Section $h={160} $pt={18}>
            <Title>Transform</Title>
            <TransformBox>
              <ReferencePoint>
                <Ico w={38} h={38} c="#cfcfcf">
                  <path d="M5 5h28v28H5z" strokeWidth={1} />
                  {[0, 1, 2].flatMap((i) => [0, 1, 2].map((j) => (
                    <rect key={`${i}${j}`} x={0.5 + i * 13.5} y={0.5 + j * 13.5} width={9} height={9} strokeWidth={1} fill={i + j === 0 ? "#fff" : C.chrome} />
                  )))}
                </Ico>
              </ReferencePoint>
              <TransformGrid>
                <Label $pad={9}>X:</Label><Field>-106 mm</Field><Label $pad={13}>W:</Label><Field>2524,831 r</Field>
                <Label $pad={9}>Y:</Label><Field>-1 mm</Field><Label $pad={18}>H:</Label><Field>899,936 m</Field>
              </TransformGrid>
              <LinkCell>
                <Ico w={20} h={24}><path d="M5 9V5q0-3 4-3h2q4 0 4 3v4M5 15v4q0 3 4 3h2q4 0 4-3v-4M10 7v9M1 2l18 19" strokeWidth={1.8} /></Ico>
              </LinkCell>
            </TransformBox>
            <Row $h={20} $mt={13} $end><Dots /></Row>
          </Section>
          <Section $h={65} $pt={17}>
            <FlexRow>
              <Title>Flex Layout</Title>
              <FlexButton>
                <Ico w={26} h={26} c="#b5b5b5"><path d="M2 3v20M24 3v20M7 2h4M15 2h4M7 24h4M15 24h4" strokeWidth={1.8} /><path d="M8 8v11M18 7v10" strokeWidth={3} /><path d="M1 1l24 24" /></Ico>
              </FlexButton>
            </FlexRow>
          </Section>
          <Section $h={269} $pt={18}>
            <Title>Appearance</Title>
            <Row $h={44} $mt={7} $ml={6}><IconCell $w={45}><NoneSwatch /></IconCell><Label>Fill</Label></Row>
            <Row $h={43} $ml={6}>
              <IconCell $w={45}><StrokeNone /></IconCell>
              <LabelCell><Underlined $w={49}>Stroke</Underlined></LabelCell>
              <Combo><Spinner /><ComboPart $w={51}>0 pt</ComboPart><ComboPart $w={26} $center $last><Chevron /></ComboPart></Combo>
              <SwatchCombo $w={81}><Swatch><StrokeSample /></Swatch><ComboPart $w={26} $center $last><Chevron /></ComboPart></SwatchCombo>
            </Row>
            <Row $h={44} $ml={6}>
              <IconCell $w={45}>
                <Ico w={24} h={23}><path d="M9 4h6M9 19h6M4.500 8v7M19.500 8v7" stroke="#8d8d8d" strokeWidth={3} /><F fill={C.blue} d="M1 1h6.500v6.500H1zM16 1h6.500v6.500H16zM1 15.500h6.500V22H1zM16 15.500h6.500V22H16z" /></Ico>
              </IconCell>
              <LabelCell><Underlined $w={50}>Corner</Underlined></LabelCell>
              <Combo><Spinner /><ComboPart $w={77} $last>4,233 mm</ComboPart></Combo>
              <SwatchCombo $w={81}><Swatch><CornerSample /></Swatch><ComboPart $w={26} $center $last><Chevron /></ComboPart></SwatchCombo>
            </Row>
            <Row $h={43} $ml={6}>
              <IconCell $w={45}>
                <Ico w={23} h={22}>
                  {Array.from({ length: 25 }, (_, i) => <rect key={i} x={2 + (i % 5) * 3.8} y={1.5 + Math.floor(i / 5) * 3.8} width={3.8} height={3.8} stroke="none" fill={i % 2 ? "#a5a5a5" : "#6a6a6a"} />)}
                  <rect x={2} y={1} width={20} height={20} stroke="#b0b0b0" />
                </Ico>
              </IconCell>
              <LabelCell><Underlined $w={58}>Opacity</Underlined></LabelCell>
              <Combo><ComboPart $w={77}>100%</ComboPart><ComboPart $w={26} $center $last><Ico w={7} h={12}><path d="M1 .7 6 6 1 11.300" strokeWidth={1.3} /></Ico></ComboPart></Combo>
            </Row>
            <Row $h={43} $ml={10}>
              <IconCell $w={45}><Ico w={26} h={22}><path d="M2 3h16v16H2z" /><F d="M1 2h4v4H1zM15 2h4v4h-4zM1 16h4v4H1zM15 16h4v4h-4zM8 1h4v3H8zM8 18h4v3H8zM21 17h4l-2 3z" /></Ico></IconCell>
              <Fx>fx.</Fx>
            </Row>
          </Section>
          <Section $h={94} $pt={18}>
            <Title>Align</Title>
            <Row $h={34} $mt={12} $ml={7}>
              <IconCell $w={51}><Ico w={32} h={24}><path d="M3 3h17v18H3zM3 0v24M20 0v24" strokeWidth={1.3} /><F d="M0 2h4v3H0zM19 2h4v3h-4zM0 19h4v3H0zM19 19h4v3h-4zM24 17h7l-3.500 5z" /></Ico></IconCell>
              {alignArt.map((d) => <IconCell key={d} $w={48}><Ico w={27} h={27}><F d={d} /></Ico></IconCell>)}
            </Row>
          </Section>
          <Section $h={129} $pt={19}>
            <Title>Text Wrap</Title>
            <Row $h={36} $mt={10} $ml={1}>
              <IconCell $w={51}><WrapOn><Lines kind={0} /></WrapOn></IconCell>
              <IconCell $w={45}><Lines kind={1} /></IconCell>
              <IconCell $w={45}><Lines kind={2} /></IconCell>
              <IconCell $w={45}><Lines kind={3} /></IconCell>
              <IconCell $w={40}><Lines kind={4} /></IconCell>
              <Check $dim /><Dim>Invert</Dim>
            </Row>
            <Row $h={20} $mt={14} $end><Dots /></Row>
          </Section>
          <Section $h={138} $pt={18}>
            <Title>Frame Fitting</Title>
            <Row $h={32} $mt={12} $ml={5}>
              <IconCell $w={37.5}><Ico w={25} h={26}><F d="M2 2h21v16H2z" /><path d="M2 20v4h21v-5" strokeDasharray="3 1.500" strokeWidth={1.2} />{[2.5, 22.5].flatMap((x) => [2.5, 17.5].map((y) => corner(x, y)))}</Ico></IconCell>
              <IconCell $w={37.5}><Frame><F d="M2 2h14v19H2z" /></Frame></IconCell>
              <IconCell $w={37.5}><Frame><F d="M2 2h11v10H2z" /><path d="M10 9v9M10 10h8" strokeWidth={1.3} /><F d="M7 16h6l-3 4zM15 7v6l4-3z" /></Frame></IconCell>
              <IconCell $w={37.5}><Frame><F d="M2 2h9v10H2z" /><path d="M10 19v-4M21 10h-4" strokeWidth={1.3} /><F d="M7 17h6l-3-4zM18 7v6l-4-3z" /></Frame></IconCell>
              <IconCell $w={37.5}><Frame><F d="M7 6h10v11H7z" /></Frame></IconCell>
              <IconCell $w={40.5}><FitFrame /></IconCell>
              <Button $w={97}>Options</Button>
            </Row>
            <Row $h={24} $mt={17} $ml={6}><Check />Auto-Fit</Row>
          </Section>
          <Section $h={240} $pt={12} $last>
            <Title>Quick Actions</Title>
            <ButtonGrid>
              {["Convert Shape", "Arrange", "Import File", "Embed", "Edit With", "Reveal in Explorer", "Find Similar Images", "Text to Image"].map((t) => <Button key={t}>{t}</Button>)}
            </ButtonGrid>
          </Section>
        </Panel>
      </Body>

      <Marks width={3832} height={2110}>
        <defs><filter id="soft" x="-10%" y="-10%" width="120%" height="120%"><feGaussianBlur stdDeviation={2.6} /></filter></defs>
        <g fill="none" stroke={C.green} strokeWidth={22} strokeLinecap="round" strokeLinejoin="round" filter="url(#soft)">
          <path d="M626 188 922 216M898 174Q908 200 924 217Q905 240 873 267" />
          <path d="M3688 172 3387 220M3423 169 3385 220 3440 263" />
          <path d="M636 1973 927 1944M867 1901Q912 1918 930 1942Q914 1970 891 2000" />
          <path d="M3593 2043 3404 1957M3478 1910 3402 1957 3416 2032" />
        </g>
      </Marks>
    </Screen>
  );
}
